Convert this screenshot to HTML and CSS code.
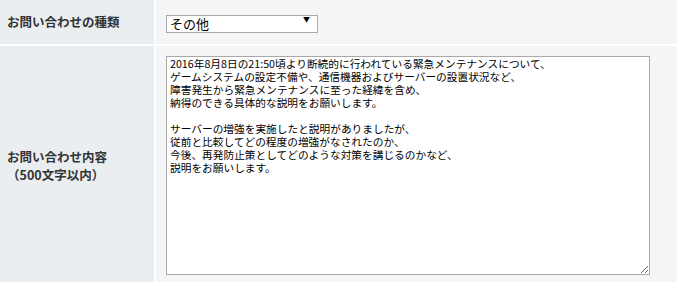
FILE: index.html
```html
<!DOCTYPE html>
<html lang="ja">
<head>
	<meta charset="UTF-8">
	<title>お問い合わせ</title>
	<link rel="stylesheet" href="styles.css">
</head>
<body>
	<form class="contact-form">
		<div class="form-row">
			<div class="form-label">お問い合わせの種類</div>
			<div class="form-field">
				<span class="select-wrap">
					<select class="type-select">
						<option>その他</option>
					</select>
				</span>
			</div>
		</div>
		<div class="form-row">
			<div class="form-label">お問い合わせ内容<br>（500文字以内）</div>
			<div class="form-field">
<textarea class="body-text">2016年8月8日の21:50頃より断続的に行われている緊急メンテナンスについて、
ゲームシステムの設定不備や、通信機器およびサーバーの設置状況など、
障害発生から緊急メンテナンスに至った経緯を含め、
納得のできる具体的な説明をお願いします。

サーバーの増強を実施したと説明がありましたが、
従前と比較してどの程度の増強がなされたのか、
今後、再発防止策としてどのような対策を講じるのかなど、
説明をお願いします。</textarea>
			</div>
		</div>
	</form>
</body>
</html>
```

FILE: styles.css
```css
html,body,div,form,span{
	padding: 0;
	margin: 0;
	border: 0;
}
body{
	background-color: #fff;
	font-family: "Noto Sans CJK JP", "Noto Sans", sans-serif;
	color: #333;
}
.contact-form{
	display: grid;
	row-gap: 2px;
}
.form-row{
	display: grid;
	grid-template-columns: 154px 1fr;
	column-gap: 2px;
}
.form-label{
	display: flex;
	align-items: center;
	padding-left: 7px;
	background-color: #eaeef0;
	font-size: 12.5px;
	font-weight: bold;
	line-height: 18px;
}
.form-field{
	padding: 10px 27px 10px 10px;
	background-color: #f4f5f6;
}
.select-wrap{
	position: relative;
	display: inline-block;
}
.select-wrap::after{
	content: "▼";
	position: absolute;
	top: 5px;
	right: 8px;
	font-size: 7px;
	line-height: 8px;
	color: #000;
	pointer-events: none;
}
.type-select{
	-webkit-appearance: none;
	appearance: none;
	width: 152px;
	height: 18px;
	padding: 0 0 0 3px;
	border: 1px solid #a9a9a9;
	border-radius: 0;
	background-color: #fff;
	font-family: "Noto Sans CJK JP", sans-serif;
	font-size: 13px;
	line-height: 16px;
	color: #000;
}
.body-text{
	display: block;
	box-sizing: border-box;
	width: 484px;
	height: 219px;
	padding: 0 3px;
	border: 1px solid #a9a9a9;
	background-color: #fff;
	font-family: "Noto Sans CJK JP", sans-serif;
	font-size: 10.7px;
	line-height: 13px;
	color: #000;
}
```
